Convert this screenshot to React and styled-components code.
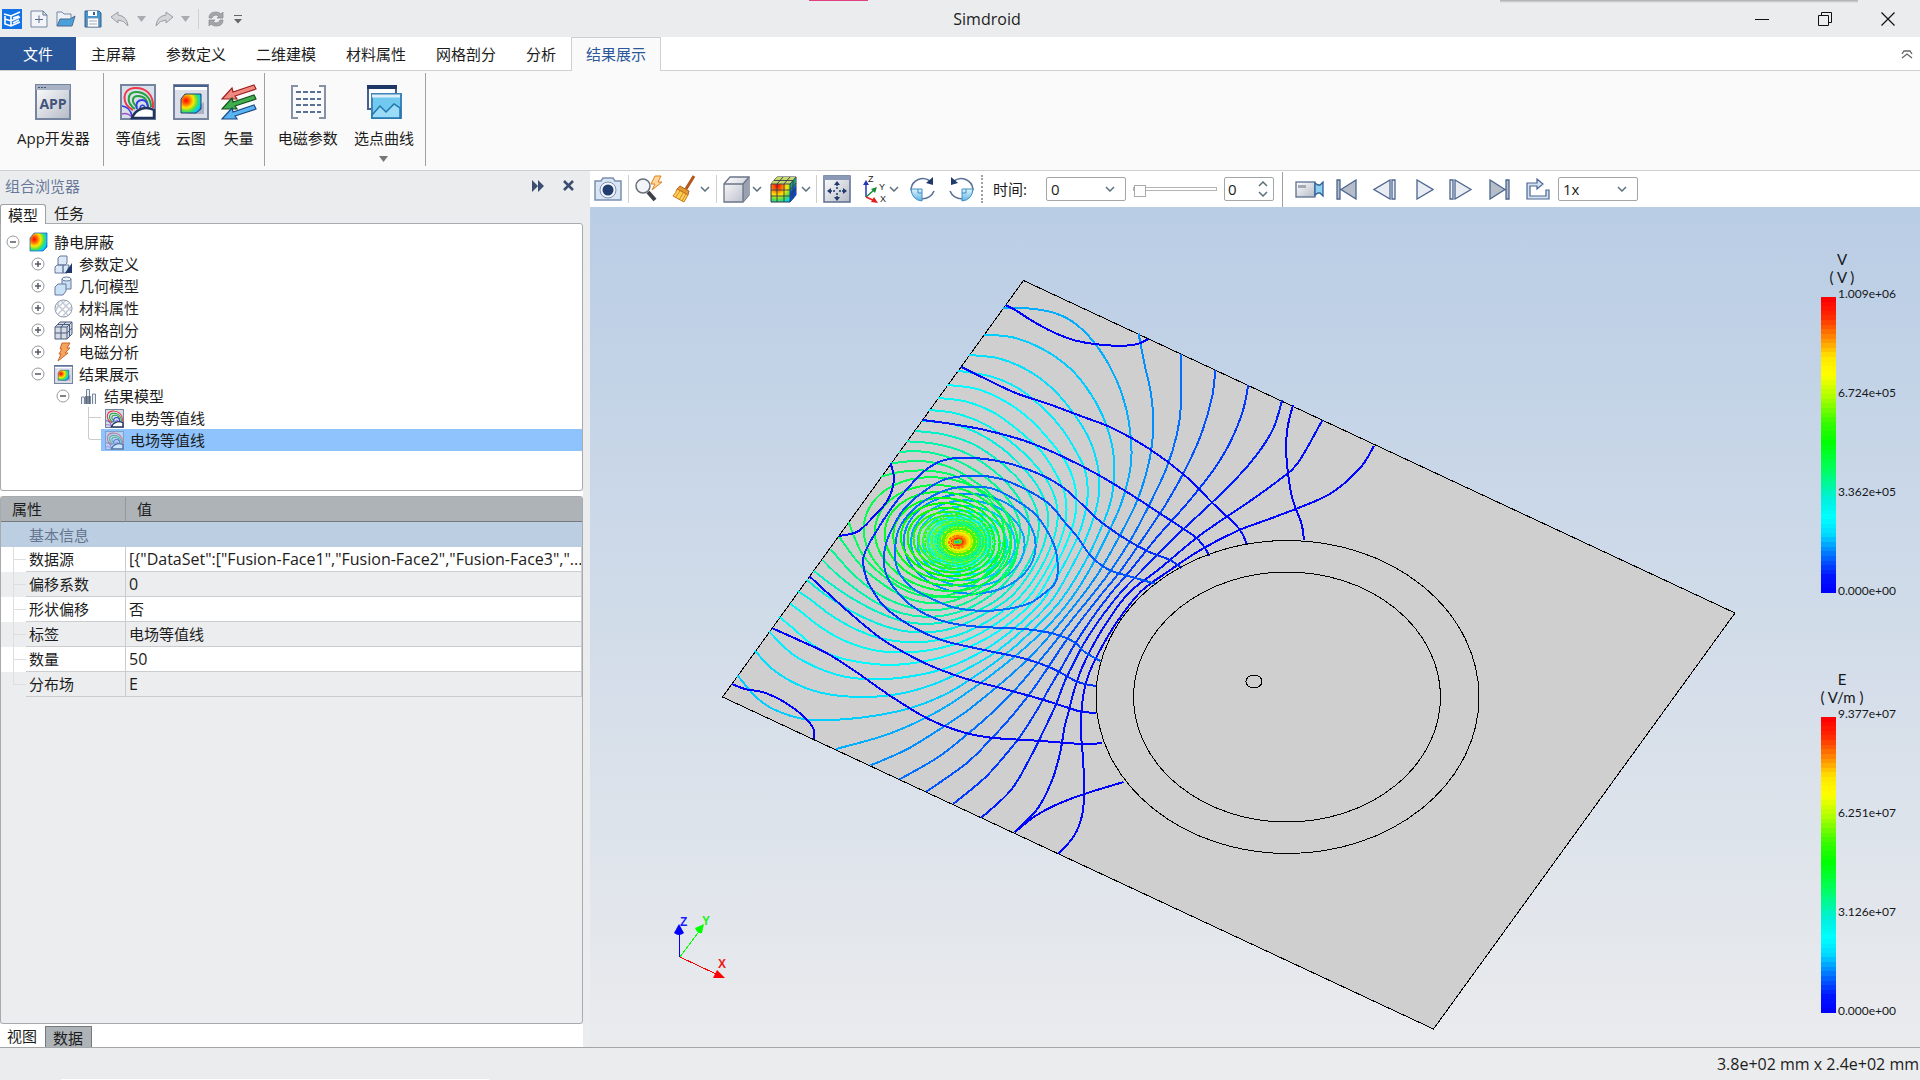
import React from "react";
import styled, { createGlobalStyle, css } from "styled-components";

const Global = createGlobalStyle`
  *, *::before, *::after { box-sizing: border-box; }
  html, body, #root { height: 100%; margin: 0; }
  body { background: #ebecee; color: #1c1c1c; overflow: hidden; }
  body, button, input, select, table {
    font-family: "Open Sans", "Noto Sans CJK SC", sans-serif;
    font-size: 15px;
    line-height: 20px;
  }
  button { border: 0; padding: 0; background: none; color: inherit; cursor: default; }
  svg { display: block; flex: none; }
`;

/* ---------- colour scale ---------- */
const STOPS = [
  [0, 0, 0, 255], [0.05, 0, 20, 255], [0.12, 0, 110, 255], [0.19, 0, 215, 255], [0.25, 0, 255, 255],
  [0.31, 0, 240, 225], [0.42, 0, 255, 90], [0.51, 0, 255, 0], [0.58, 60, 250, 0], [0.67, 180, 255, 0],
  [0.74, 255, 255, 0], [0.8, 255, 230, 0], [0.88, 255, 120, 0], [0.94, 255, 40, 0], [1, 255, 0, 0],
];
function scale(t) {
  for (let i = 1; i < STOPS.length; i++) {
    const a = STOPS[i - 1];
    const b = STOPS[i];
    if (t <= b[0]) {
      const f = (t - a[0]) / (b[0] - a[0]);
      return `rgb(${[1, 2, 3].map((k) => Math.round(a[k] + (b[k] - a[k]) * f)).join(",")})`;
    }
  }
  return "rgb(255,0,0)";
}
const BANDS = Array.from({ length: 64 }, (_, i) => {
  const t = 1 - i / 63;
  return `${scale(t)} ${(i / 64) * 100}% ${((i + 1) / 64) * 100}%`;
}).join(",");

/* ---------- contour data, in field units ---------- */
const POTENTIAL = [
  [[1831,528],[1790,597],[1704,674],[1568,735],[1450,782],[1345,840],[1250,908],[1178,965],[1112,1055],[1062,1145],[1030,1220],[1014,1300],[1011,1390],[1016,1460],[1020,1560],[1013,1640],[990,1700],[948,1751]],
  [[1687,450],[1618,579],[1568,628],[1475,700],[1345,795],[1232,895],[1150,963],[1100,1030],[1050,1115],[1015,1190],[992,1260],[975,1330],[965,1370],[952,1450],[930,1530],[890,1615],[825,1687]],
  [[1574,391],[1545,485],[1480,585],[1385,690],[1275,800],[1180,903],[1124,965],[1072,1035],[1022,1115],[990,1180],[965,1235],[938,1310],[905,1385],[870,1460],[815,1560],[732,1643]],
  [[1479,346],[1462,430],[1422,530],[1375,610],[1308,700],[1225,800],[1150,900],[1096,968],[1045,1040],[995,1120],[955,1195],[922,1255],[885,1325],[840,1400],[795,1460],[740,1525],[653,1602]],
  [[1387,300],[1378,380],[1350,485],[1307,590],[1250,700],[1188,800],[1120,905],[1070,970],[1015,1045],[970,1110],[920,1190],[875,1260],[820,1335],[765,1400],[690,1480],[578,1565]],
  [[1290,252],[1291,400],[1280,490],[1250,595],[1204,700],[1155,800],[1092,905],[1042,975],[985,1050],[935,1120],[885,1185],[830,1255],[765,1325],[690,1395],[610,1462],[503,1528]],
  [[1172,191],[1190,290],[1205,360],[1213,440],[1210,520],[1196,600],[1165,700],[1118,800],[1062,905],[1012,980],[958,1052],[900,1125],[835,1195],[765,1260],[685,1328],[600,1388],[520,1440],[422,1486]],
  [[792,113],[870,116],[940,130],[1000,165],[1060,235],[1110,330],[1138,420],[1150,500],[1152,560],[1145,620],[1122,705],[1082,800],[1032,905],[984,985],[930,1055],[868,1120],[790,1190],[705,1258],[620,1318],[540,1362],[450,1400],[325,1437]],
  [[739,194],[820,202],[900,235],[980,295],[1040,375],[1080,460],[1100,540],[1104,600],[1095,690],[1065,780],[1020,880],[955,990],[890,1065],[820,1135],[740,1200],[640,1268],[540,1312],[440,1336],[345,1348],[240,1348],[150,1318],[100,1280],[48,1215]],
  [[697,255],[780,265],[860,300],[930,355],[990,430],[1035,510],[1058,590],[1062,660],[1050,730],[1025,805],[985,890],[930,990],[860,1068],[780,1140],[700,1192],[600,1242],[500,1272],[400,1281],[300,1272],[220,1245],[150,1200],[98,1143]],
  [[665,302],[760,320],[840,358],[910,420],[960,480],[1000,550],[1022,600],[1030,665],[1020,740],[1000,805],[960,890],[905,990],[830,1070],[740,1140],[640,1192],[540,1218],[440,1228],[350,1220],[270,1192],[200,1150],[138,1085]],
  [[637,345],[720,357],[800,395],[870,450],[930,520],[965,570],[990,630],[998,690],[992,750],[970,820],[935,895],[885,985],[800,1068],[720,1120],[620,1162],[520,1182],[440,1183],[330,1162],[260,1125],[205,1075],[165,1040]],
  [[611,384],[690,395],[770,430],[840,485],[900,545],[940,610],[965,670],[970,730],[960,790],[925,880],[865,980],[780,1056],[690,1110],[590,1140],[500,1147],[420,1138],[340,1108],[280,1070],[230,1028],[195,1000]],
  [[586,420],[660,430],[740,462],[810,512],[870,570],[915,630],[940,690],[945,750],[930,820],[895,900],[840,980],[760,1047],[680,1090],[600,1112],[530,1117],[450,1105],[380,1078],[310,1035],[255,990],[218,963]],
  [[567,452],[650,462],[720,488],[790,535],[850,595],[890,650],[915,710],[918,765],[905,830],[870,905],[815,980],[740,1032],[660,1072],[580,1087],[510,1082],[440,1060],[370,1025],[300,978],[243,930]],
  [[545,483],[620,492],[700,518],[765,560],[825,615],[865,670],[888,725],[892,780],[880,840],[845,910],[790,978],[715,1026],[640,1054],[575,1062],[510,1053],[440,1025],[370,985],[310,942],[262,902]],
  [[524,514],[600,521],[680,545],[745,585],[800,635],[840,690],[862,740],[865,790],[850,850],[815,918],[765,970],[700,1013],[630,1036],[570,1040],[510,1030],[450,1005],[390,965],[330,915],[287,870]],
  [[500,545],[580,546],[655,568],[720,605],[775,650],[815,700],[838,755],[840,800],[825,860],[790,920],[740,968],[680,1003],[620,1019],[560,1018],[500,1001],[440,970],[375,915],[310,838]],
  [[479,580],[560,573],[640,590],[700,625],[750,665],[790,710],[812,760],[815,805],[800,862],[765,918],[715,962],[655,992],[600,1000],[540,990],[480,960],[400,893],[333,800]],
  [[451,620],[510,605],[580,602],[650,615],[710,650],[755,690],[785,735],[795,785],[790,835],[765,888],[720,935],[665,968],[600,980],[530,966],[460,920],[400,855],[360,757]],
];

const FIELD = [
  [0.0, [[800,105],[830,122],[870,150],[930,185],[1000,213],[1100,227],[1165,223],[1200,207]]],
  [0.02, [[675,290],[750,330],[830,370],[920,402],[1010,438],[1100,475],[1200,535],[1300,615],[1380,700],[1440,760],[1462,790],[1475,823]]],
  [0.05, [[567,450],[650,462],[750,482],[860,515],[960,560],[1060,615],[1160,680],[1260,750],[1330,800],[1355,830],[1370,857]]],
  [0.02, [[477,578],[487,628],[470,690],[430,740],[385,785],[333,798]]],
  [0.03, [[250,918],[290,958],[370,1035],[450,1105],[520,1150],[600,1192],[700,1230],[800,1258],[900,1288],[980,1315],[1010,1325],[1052,1329]]],
  [0.01, [[147,1075],[220,1110],[300,1150],[380,1205],[480,1280],[580,1345],[660,1380],[750,1402],[900,1413],[1000,1421],[1070,1420]]],
  [0.0, [[33,1242],[70,1257],[130,1270],[200,1310],[258,1368],[262,1407]]],
  [0.0, [[825,1687],[880,1640],[940,1605],[1020,1572],[1130,1536]]],
  [0.01, [[1604,406],[1588,480],[1586,560],[1601,678],[1628,760],[1635,810]]],
  [0.07, [[1292,895],[1260,870],[1200,845],[1140,810],[1060,750],[970,660],[900,615],[800,578],[690,563],[620,573],[570,605],[530,650],[490,700],[440,780],[402,860],[410,925],[430,965],[460,1010],[530,1065],[620,1110],[740,1140],[850,1165],[930,1195],[1000,1235],[1052,1248]]],
  [0.1, [[1222,942],[1150,920],[1090,900],[1040,860],[1000,800],[960,750],[920,700],[850,655],[780,625],[710,617],[630,628],[570,665],[530,700],[500,740],[465,820],[460,890],[475,935],[500,970],[530,1002],[580,1035],[640,1058],[720,1070],[850,1077],[930,1090],[990,1115],[1020,1145],[1065,1173]]],
  [0.12, [[700,650],[760,655],[820,685],[880,730],[920,790],[942,850],[942,930],[910,968],[870,998],[820,1014],[740,1023],[660,1014],[600,990],[540,955],[500,905],[490,850],[500,780],[540,720],[600,675],[650,655],[700,650]]],
];

function smooth(points) {
  let d = `M${points[0][0]} ${points[0][1]}`;
  for (let i = 0; i < points.length - 1; i++) {
    const p0 = points[i - 1] || points[i];
    const p1 = points[i];
    const p2 = points[i + 1];
    const p3 = points[i + 2] || p2;
    const c = [
      p1[0] + (p2[0] - p0[0]) / 6, p1[1] + (p2[1] - p0[1]) / 6,
      p2[0] - (p3[0] - p1[0]) / 6, p2[1] - (p3[1] - p1[1]) / 6,
    ].map((n) => n.toFixed(1));
    d += `C${c[0]} ${c[1]} ${c[2]} ${c[3]} ${p2[0]} ${p2[1]}`;
  }
  return d;
}

/* closed curves around the charge, given by their reach on each side of it */
function loop(left, right, up, down, lean) {
  const cx = 956.7;
  const cy = 541.7;
  const pts = [];
  for (let i = 0; i <= 32; i++) {
    const a = (i / 32) * Math.PI * 2;
    const c = Math.cos(a);
    const s = Math.sin(a);
    const rx = (left + right) / 2;
    const ry = (up + down) / 2;
    pts.push([cx + (right - left) / 2 + rx * c, cy + (down - up) / 2 + ry * s + lean * rx * c]);
  }
  return smooth(pts);
}

const LOOPS = Array.from({ length: 28 }, (_, k) => {
  const f = Math.pow(0.88, k);
  return { d: loop(93 * f, (61 + 6 * (1 - f)) * f, 64 * f, (55 + 6 * (1 - f)) * f, 0.1 * f), t: 0.43 + k * 0.02 };
});
const FIELD_LOOPS = Array.from({ length: 22 }, (_, k) => {
  const f = Math.pow(0.86, k);
  return { d: loop(53 * f, 79 * f, 48 * f, 52 * f, 0.03 * f), t: 0.14 + k * 0.02 };
});

function FieldPlot() {
  return (
    <PlotSvg viewBox="590 207 1330 840" preserveAspectRatio="xMidYMid meet" role="img" aria-label="电场等值线">
      <defs>
        <radialGradient id="core">
          <stop offset="0" stopColor="#00c8d8" /><stop offset="0.06" stopColor="#6be000" /><stop offset="0.1" stopColor="#ff3a00" />
          <stop offset="0.18" stopColor="#ffb400" /><stop offset="0.26" stopColor="#f4f400" /><stop offset="0.36" stopColor="#4cf200" />
          <stop offset="0.5" stopColor="#00ff70" stopOpacity="0.7" /><stop offset="0.7" stopColor="#00ffd0" stopOpacity="0.4" /><stop offset="1" stopColor="#00ffff" stopOpacity="0" />
        </radialGradient>
      </defs>
      <g shapeRendering="crispEdges" fill="none">
        <path d="M1023.500 280.500L1735 613L1433.500 1029L722.500 697Z" fill="#cfcfcf" stroke="#000" strokeWidth="1" />
        <g transform="translate(720 270) scale(0.357143 0.333333)">
          {POTENTIAL.map((p, i) => (
            <path key={i} d={smooth(p)} stroke={scale(0.015 + i * 0.021)} strokeWidth="2" vectorEffect="non-scaling-stroke" />
          ))}
        </g>
        {FIELD_LOOPS.map((l, i) => (
          <path key={i} d={l.d} stroke={scale(l.t)} strokeWidth="2" strokeDasharray={i > 4 ? "5 2 3 1" : undefined} />
        ))}
        {LOOPS.map((l, i) => (
          <path key={i} d={l.d} stroke={scale(l.t)} strokeWidth={i > 10 ? 1 : 2} strokeDasharray={i > 12 ? "5 1 3 2" : undefined} />
        ))}
        <g transform="translate(720 270) scale(0.357143 0.333333)">
          {FIELD.map(([t, p], i) => (
            <path key={i} d={smooth(p)} stroke={scale(t)} strokeWidth="2" vectorEffect="non-scaling-stroke" />
          ))}
        </g>
        <ellipse cx="959" cy="541.500" rx="42" ry="34" fill="url(#core)" />
        {[14, 18, 22, 26, 30, 34].map((r, i) => (
          <ellipse key={r} cx="959" cy="541.500" rx={r} ry={r * 0.8} stroke={["#ffe600", "#b8ff00", "#00e6c0", "#8cf000", "#00f0ff", "#30f000"][i]} strokeWidth="1" strokeDasharray="2 2 3 1" />
        ))}
        <ellipse cx="957" cy="542" rx="8" ry="6" stroke="#ff7a00" strokeWidth="2" strokeDasharray="3 1" />
        <ellipse cx="957" cy="542" rx="6" ry="4" stroke="#ff2a00" strokeWidth="1" strokeDasharray="4 1" />
        <ellipse cx="957" cy="542" rx="3" ry="2" fill="#00c8d8" stroke="#6be000" />
        <g stroke="#000" strokeWidth="1">
          <ellipse cx="1287.500" cy="697" rx="191.500" ry="156.500" />
          <ellipse cx="1287" cy="697" rx="153.500" ry="125" />
          <ellipse cx="1254" cy="681.500" rx="8" ry="6.500" />
        </g>
        <path d="M679.500 957V932" stroke="#0000ff" />
        <path d="M680 957L700 930" stroke="#00ff00" />
        <path d="M680 957L716 974" stroke="#ff0000" />
      </g>
      <path d="M679 924L684 933Q679 937 674 933Z" fill="#0000ff" />
      <path d="M704 924L702 933Q697 934 695 928Z" fill="#00ff00" />
      <path d="M725 978L713 978L717 970Z" fill="#ff0000" />
      <g fontFamily="Liberation Sans, sans-serif" fontWeight="700" fontSize="12">
        <text x="680" y="926" fill="#1a1aff">Z</text>
        <text x="702" y="925" fill="#22f022">Y</text>
        <text x="718" y="968" fill="#f01818">X</text>
      </g>
    </PlotSvg>
  );
}

/* ---------- icons ---------- */
const NAVY = "#3b4d70";
const Svg = ({ w = 28, h = w, vb, children }) => (
  <svg width={w} height={h} viewBox={vb || `0 0 ${w} ${h}`} fill="none" aria-hidden="true">{children}</svg>
);
const HiddenSvg = styled.svg`position: absolute;`;
const Defs = () => (
  <HiddenSvg width="0" height="0" aria-hidden="true">
    <defs>
      <linearGradient id="steel" x1="0" y1="0" x2="1" y2="1"><stop offset="0" stopColor="#fff" /><stop offset="1" stopColor="#b4bac6" /></linearGradient>
      <linearGradient id="sky" x1="0" y1="0" x2="0" y2="1"><stop offset="0" stopColor="#e3f3fc" /><stop offset="1" stopColor="#5fb4e4" /></linearGradient>
      <radialGradient id="heat" cx="0.25" cy="0.35" r="0.95">
        <stop offset="0" stopColor="#f00" /><stop offset="0.2" stopColor="#ff6a00" /><stop offset="0.4" stopColor="#ffe600" />
        <stop offset="0.6" stopColor="#4be04b" /><stop offset="0.78" stopColor="#00cfff" /><stop offset="1" stopColor="#0030e0" />
      </radialGradient>
    </defs>
  </HiddenSvg>
);

const Logo = () => (
  <Svg w={20}><rect width="20" height="20" fill="#1273e6" /><path d="M2 5L9 7L18 3M3 7V15L9 17L18 13M3 10L9 12L18 8M9 7V17M11 9L17 7M11 14L17 11" stroke="#fff" strokeWidth="1.600" /></Svg>
);
const NewIcon = () => <Svg w={18}><path d="M1 1H13L17 5V17H1Z" fill="#f2f4f8" stroke="#7787a3" /><path d="M13 1V5H17M9 5.500V13M5 9.500H13" stroke="#566a8d" /></Svg>;
const OpenIcon = () => <Svg w={20} h={16}><path d="M1 15V1H6L8 3H15V7" fill="#eef1f6" stroke="#7787a3" /><path d="M1 15L4 8H14L19 5L16 15Z" fill="#4aa0d8" stroke="#4b6a92" /></Svg>;
const SaveIcon = () => <Svg w={18}><path d="M1 1H15L17 3V17H1Z" fill="#3f97d0" stroke="#3f5f8c" /><rect x="4" y="1" width="9" height="5" fill="#fff" /><rect x="9" y="2" width="2" height="3" fill="#3f5f8c" /><rect x="3.500" y="8" width="11" height="9" fill="#fff" stroke="#8898b0" /><path d="M5 11H13M5 14H13" stroke="#9aa6b8" /></Svg>;
const UndoIcon = ({ flip }) => <Svg w={20} h={16}><path transform={flip ? "matrix(-1 0 0 1 20 0)" : undefined} d="M1 6L8 1V4Q17 5 18 15Q14 9 8 9V12Z" fill="#d4d7da" stroke="#9a9ea2" /></Svg>;
const Triangle = ({ c = "#a8acb0" }) => <Svg w={9} h={6}><path d="M0 0H9L4.500 6Z" fill={c} /></Svg>;
const RefreshIcon = () => <Svg w={18}><path d="M2 8Q2 2 9 2Q12 2 14 4L16 2V8H10L12 6Q9 4 6 6L5 8ZM16 10Q16 16 9 16Q6 16 4 14L2 16V10H8L6 12Q9 14 12 12L13 10Z" fill="#a4a6a8" stroke="#85878a" strokeWidth="0.700" /></Svg>;
const MoreIcon = () => <Svg w={10}><path d="M1 1.500H9" stroke="#666" /><path d="M1 5H9L5 9.500Z" fill="#666" /></Svg>;

const AppIcon = () => (
  <Svg w={36}><rect x="1" y="1" width="34" height="34" fill="url(#steel)" stroke="#75849f" strokeWidth="2" /><rect x="1" y="1" width="34" height="5" fill="#a8b2c4" /><path d="M3 3.500H11" stroke="#44587c" strokeDasharray="2 1" />
    <text x="18" y="25" textAnchor="middle" fontFamily="Open Sans, sans-serif" fontSize="14" fontWeight="700" fill="#41557a">APP</text></Svg>
);
const ContourIcon = ({ w = 36, faded }) => (
  <Svg w={w} vb="0 0 36 36"><g opacity={faded ? 0.55 : 1}><rect x="1" y="1" width="34" height="34" fill="#d9e0ec" stroke="#75849f" strokeWidth="2" />
    <path d="M13 26C1 20 2 5 14 4C25 3 34 10 33 24" stroke="#f0384a" strokeWidth="2" />
    <path d="M15 25C5 18 8 8 16 8C25 8 31 14 31 23" stroke="#24a13c" strokeWidth="2" />
    <path d="M17 23C10 17 13 12 18 12C25 12 28 17 28 23" stroke="#24a13c" strokeWidth="2" />
    <path d="M17 25C15 18 19 16 22 16C26 16 28 20 28 25" stroke="#3340dd" strokeWidth="2" />
    <path d="M20 25C20 20 25 20 25 25" stroke="#3340dd" strokeWidth="1.500" />
    <path d="M2 22Q10 23 12 32" stroke="#3340dd" strokeWidth="1.500" /><path d="M2 30Q7 28 12 33" stroke="#a050c8" strokeWidth="1.500" />
    <path d="M12 34C16 24 26 22 34 26V34Z" fill="#fff" stroke="#20345c" strokeWidth="2.500" /></g></Svg>
);
const CloudMapIcon = ({ w = 36 }) => (
  <Svg w={w} vb="0 0 36 36"><rect x="1" y="1" width="34" height="34" fill="#d9dee8" stroke="#75849f" strokeWidth="2" /><path d="M2 4.500H34" stroke="#fff" strokeWidth="3" /><path d="M1 2H35" stroke="#46618f" strokeWidth="2" /><path d="M14 30H31V18Z" fill="#aab1bf" /><path d="M8 15L12 10H28V25L23 29H8Z" fill="url(#heat)" stroke="#26406e" /></Svg>
);
const VectorIcon = () => (
  <Svg w={36}>{[["#f08a80", "#a02020", 0], ["#3fae4e", "#17501f", 10], ["#59b4f2", "#1d4a86", 20]].map(([f, s, y]) => (
    <path key={y} transform={`translate(0 ${y})`} d="M1 15L11 4L12 8L33 1L35 5L14 12L16 15Z" fill={f} stroke={s} strokeWidth="1.200" />))}</Svg>
);
const MatrixIcon = () => <Svg w={36}><path d="M8 2H2V34H8M29 2H35V34H29" stroke="#8791a6" strokeWidth="2" /><path d="M6 8H31M6 15H31M6 21H31M6 28H31" stroke="#5a7097" strokeWidth="2" strokeDasharray="5 2" /></Svg>;
const CurveIcon = () => <Svg w={36}><rect x="2" y="2" width="28" height="23" fill="#fff" stroke="#46618f" strokeWidth="2" /><rect x="1" y="1" width="30" height="4" fill="#1f3764" /><rect x="6" y="10" width="29" height="24" fill="#72c9f0" stroke="#3f83b8" strokeWidth="2" /><path d="M6 12H34" stroke="#ddf0fa" strokeWidth="3" /><path d="M6 31L14 22L20 28L28 20L34 24V34H6Z" fill="#9adcf7" stroke="#2277ac" strokeWidth="1.500" /></Svg>;

const HeatIcon = () => <Svg w={19} h={20}><path d="M1 6L5 1H18V15L14 19H1Z" fill="url(#heat)" stroke="#0a5dd0" strokeWidth="0.700" /></Svg>;
const ParamIcon = () => <Svg w={19}><path d="M4 10V3L6 1H13V8L11 10ZM1 18V12L3 10H9V18ZM9 18V10H15L13 18Z" fill="#dbe8f5" stroke="#66799c" /><path d="M11 18H18V8Z" fill="#20396b" /></Svg>;
const GeoIcon = () => <Svg w={19} h={20}><path d="M8 3V13H17V3" fill="#c9dff4" stroke="#66799c" /><ellipse cx="12.500" cy="3" rx="4.500" ry="2" fill="#edf5fc" stroke="#66799c" /><path d="M1 19V11L4 8H12V15L9 19Z" fill="#c9e2f7" stroke="#66799c" /></Svg>;
const MatIcon = () => <Svg w={19}><circle cx="9.500" cy="9.500" r="8.500" fill="#fff" stroke="#8290a8" /><path d="M3 5L14 16M7 2L17 12M5 3L2 12M15 4L4 15M17 8L9 17M11 2L2 10" stroke="#c4cad5" strokeWidth="1.500" /></Svg>;
const MeshIcon = () => <Svg w={19}><path d="M1 6L6 1H18V13L13 18H1Z" fill="#d6dbe4" stroke="#4b5d7e" /><path d="M1 6H13V18M13 6L18 1M7 6V18M1 12H13L18 7M7 6L12 1M3.500 3.500H15.500V15.500" stroke="#4b5d7e" /></Svg>;
const BoltIcon = ({ w = 16 }) => <Svg w={w} h={20} vb="0 0 16 20"><path d="M6 1H14L11 6H14L9 11H12L2 19L5 12H3L6 7H4Z" fill="#f6a45c" stroke="#c8672a" /></Svg>;
const BarsIcon = () => <Svg w={17}><path d="M1.500 16V9H4.500V16M6.500 16V1.500H9.500V16M12.500 16V6H15.500V16" stroke="#75849a" fill="#eef1f4" /><rect x="5" y="8" width="6" height="8" fill="#4c5a6e" opacity="0.700" /></Svg>;
const Expander = ({ open }) => <Svg w={14} h={14}><circle cx="7" cy="7" r="6" fill="#fff" stroke="#9a9a9a" /><path d={open ? "M4 7H10" : "M4 7H10M7 4V10"} stroke="#555b66" strokeWidth="1.500" /></Svg>;

const CameraIcon = () => <Svg w={28} h={24}><path d="M1 4H7L9 1H19L21 4H27V23H1Z" fill="#d8e5f5" stroke="#7c8fb0" strokeWidth="1.500" /><circle cx="14" cy="13" r="8" fill="#f3f6fb" stroke="#7c8fb0" /><circle cx="14" cy="13" r="5.500" fill="#223d70" /></Svg>;
const FindIcon = () => <Svg w={28}><circle cx="8" cy="11" r="7" fill="#f1f4f8" stroke="#6b7078" strokeWidth="1.500" /><path d="M13 17L20 25" stroke="#3e4248" strokeWidth="4" /><path d="M20 1H26L23 7H27L17 15L20 9H16Z" fill="#ffd79a" stroke="#e07f1e" /></Svg>;
const BroomIcon = () => <Svg w={24} h={28}><path d="M22 1L14 14" stroke="#b4561c" strokeWidth="3" /><path d="M8 11L17 16L16 20L5 14Z" fill="#e39a30" stroke="#9c4e16" strokeWidth="0.800" /><path d="M5 14L16 20L12 27L1 21Q4 18 5 14Z" fill="#ffd057" stroke="#c97818" /><path d="M8 16L4 22M11 18L7 25M14 19L10 26" stroke="#c97818" strokeWidth="0.800" /></Svg>;
const CubeIcon = () => <Svg w={27}><path d="M1 8L7 1H26V19L20 26H1Z" fill="url(#steel)" stroke="#6b7488" strokeWidth="1.300" /><path d="M20 8L26 1V19L20 26Z" fill="#9aa2b2" /><path d="M1 8H20V26M20 8L26 1" stroke="#6b7488" strokeWidth="1.300" /></Svg>;
const HeatCubeIcon = () => <Svg w={27}><path d="M1 8L7 1H26V19L20 26H1Z" fill="url(#heat)" stroke="#334" /><path d="M1 8L7 1H26L20 8Z" fill="#c9d86a" /><path d="M20 8L26 1V19L20 26Z" fill="#1a9c7c" /><path d="M20 16L26 9V19L20 26Z" fill="#0a49d8" /><path d="M1 8H20V26M20 8L26 1M7 8V26M14 8V26M1 14H20L26 7M1 20H20L26 13M7 8L13 1M14 8L20 1M4 4.500H23V22.500" stroke="#333c50" strokeWidth="0.900" /></Svg>;
const FitIcon = () => <Svg w={28}><rect x="1" y="1" width="26" height="26" fill="url(#steel)" stroke="#5c6e92" strokeWidth="1.500" /><rect x="1" y="1" width="26" height="4" fill="#8a9ab6" /><g stroke="#20396b" strokeWidth="1.500" strokeDasharray="2 1"><path d="M14 9V14M14 18V23M7 16H12M16 16H21" /></g><path d="M14 6L17 10H11ZM14 26L17 22H11ZM4 16L8 13V19ZM24 16L20 13V19Z" fill="#20396b" /></Svg>;
const AxesIcon = () => (
  <Svg w={24} h={28}><path d="M3 22V8" stroke="#2338b4" strokeWidth="1.500" /><path d="M3 22L11 15" stroke="#168b38" strokeWidth="1.500" /><path d="M3 22L12 26" stroke="#e02020" strokeWidth="1.500" /><path d="M3 5L6 10H0Z" fill="#2338b4" /><path d="M14 12L12 18L8 14Z" fill="#168b38" /><path d="M15 28L8 27L11 22Z" fill="#e02020" />
    <g fontFamily="Liberation Sans, sans-serif" fontSize="9" fill="#222"><text x="5" y="7">Z</text><text x="16" y="15">Y</text><text x="17" y="27">X</text></g></Svg>
);
const RotateIcon = ({ flip }) => <Svg w={27}><g transform={flip ? "matrix(-1 0 0 1 27 0)" : undefined}><path d="M21 5A12 12 0 0 0 2 13A12 12 0 0 0 25 15" stroke="#5b7297" strokeWidth="1.600" /><path d="M17 7L24 9V1Z" fill="#20396b" /><path d="M2 13H13V25Q3 24 2 13Z" fill="url(#sky)" stroke="#3c8fc4" /><path d="M9 13V17H13" stroke="#3c8fc4" /></g></Svg>;
const Chevron = ({ up }) => <Svg w={10} h={6}><path d={up ? "M1 5L5 1L9 5" : "M1 1L5 5L9 1"} stroke="#5b6f7c" strokeWidth="1.500" /></Svg>;
const VideoIcon = () => <Svg w={29} h={18}><rect x="1" y="2" width="19" height="15" fill="url(#steel)" stroke="#5c6e92" strokeWidth="1.300" /><rect x="3" y="5" width="8" height="3" fill="#a5a9b2" /><path d="M20 3L23 5H25L28 2V16L25 13H23L20 15Z" fill="#8fd0f2" stroke="#2f5f94" strokeWidth="1.300" /></Svg>;
const PLAY = {
  first: [21, "M1 1H4V20H1ZM20 1V20L5 10.500Z", true],
  back: [24, "M17 1V20L1 10.500ZM19 1H22V20H19Z"],
  play: [18, "M1 1V20L17 10.500Z"],
  next: [24, "M1 1H4V20H1ZM6 1V20L22 10.500Z"],
  last: [21, "M1 1V20L16 10.500ZM17 1H20V20H17Z", true],
};
const PlayIcon = ({ kind }) => <Svg w={PLAY[kind][0]} h={21}><path d={PLAY[kind][1]} fill={PLAY[kind][2] ? "#b6bcc8" : "#e9ecf2"} stroke="#4c6690" strokeWidth="1.300" /></Svg>;
const LoopIcon = () => <Svg w={24} h={22}><path d="M1 5H11V1L17 6L11 11V8H4V18H20V12H23V21H1Z" fill="#d3e2f2" stroke="#4c6690" strokeWidth="1.200" /></Svg>;

/* ---------- shell ---------- */
const Window = styled.div`
  display: flex; flex-direction: column; height: 100vh; background: #ebecee;
`;
const TitleBar = styled.header`
  display: grid; grid-template-columns: 1fr auto 1fr; align-items: center; height: 37px; flex: none;
  background: linear-gradient(#e0407f, #e0407f) 809px 0 / 59px 1px no-repeat, linear-gradient(#aaa, #ebecee) 1500px 0 / 358px 3px no-repeat, #ebecee;
`;
const QuickBar = styled.div`display: flex; align-items: center; gap: 8px; padding-left: 2px;`;
const QuickButton = styled.button`display: flex; align-items: center; gap: ${(p) => p.$gap || 0}px;`;
const QuickLine = styled.span`width: 1px; height: 20px; background: #cfd1d3;`;
const Title = styled.h1`margin: 0; padding-left: 54px; font-size: 16px; font-weight: 400; line-height: 20px;`;
const WindowButtons = styled.div`display: flex; justify-content: flex-end; padding-right: 1px;`;
const WindowButton = styled.button`width: 63px; height: 36px; display: grid; place-items: center;`;

const RibbonTabs = styled.nav`display: flex; height: 34px; flex: none; background: #fff; border-bottom: 1px solid #cfcfcf;`;
const RibbonTab = styled.button`
  padding: 0 15px; height: 34px;
  ${(p) => p.$file && css`padding: 0 23px; height: 33px; background: #2a579a; color: #fff;`}
  ${(p) => p.$active && css`color: #2a579a; background: #fafafa; border: 1px solid #cfcfcf; border-bottom: 0; padding: 0 14px 2px;`}
`;
const Collapse = styled.button`margin-left: auto; padding: 0 7px;`;
const Ribbon = styled.div`display: flex; height: 100px; flex: none; padding: 2px 0 4px; background: #fafafa; border-bottom: 1px solid #cfcfcf;`;
const RibbonGroup = styled.div`display: flex; gap: ${(p) => p.$gap}px; padding: 0 ${(p) => p.$end}px 0 ${(p) => p.$start}px; border-right: 1px solid #a0a0a0;`;
const RibbonButton = styled.button`display: flex; flex-direction: column; align-items: center; padding-top: 11px; gap: 8px; white-space: nowrap;`;

const Body = styled.main`flex: 1; min-height: 0; display: grid; grid-template-columns: 590px minmax(0, 1fr);`;
const Dock = styled.aside`display: flex; flex-direction: column; min-height: 0; padding-right: 7px; background: #ebecee;`;
const DockTitle = styled.div`
  display: flex; align-items: center; height: 33px; flex: none; padding: 0 0 4px 5px; color: #68789a;
  span { flex: 1; }
  button { width: 30px; display: grid; place-items: center; }
`;
const DockTabs = styled.div`display: flex; height: 19px; flex: none; align-items: flex-end;`;
const DockTab = styled.button`
  height: 20px; padding: 0 8px; line-height: 20px;
  ${(p) => p.$active && css`position: relative; z-index: 1; background: #fff; border: 1px solid #a0a0a0; border-bottom: 0; border-radius: 3px 3px 0 0; margin-bottom: -1px; padding: 0 7px;`}
`;
const Tree = styled.ul`
  flex: none; height: 268px; margin: 0; padding: 7px 0 0; list-style: none; background: #fff;
  border: 1px solid #a8abae; border-radius: 0 3px 3px 3px;
`;
const TreeRow = styled.li`display: flex; height: 22px; padding-left: ${(p) => p.$indent}px;`;
const TreeItem = styled.button`
  display: flex; align-items: center; gap: 6px; text-align: left; padding-left: 4px;
  background: ${(p) => (p.$selected ? "#8fc3fd" : "none")}; flex: 1;
`;
const IconSlot = styled.span`display: grid; place-items: center; width: 19px; height: 22px;`;
const Toggle = styled.button`width: 21px; display: grid; place-items: center; padding-right: 4px;`;
const Branch = styled.span`
  width: 13px; margin-left: 8px; border-left: 1px solid #ccc; height: ${(p) => (p.$last ? 11 : 22)}px;
  ${(p) => p.$last ? css`border-bottom: 1px solid #ccc; border-radius: 0 0 0 3px;` : css`background: linear-gradient(#ccc, #ccc) 0 10px / 100% 1px no-repeat;`}
`;

const Properties = styled.section`flex: 1; min-height: 0; border: 1px solid #a8abae; border-radius: 3px; background: #ecedef;`;
const Gap = styled.div`height: 5px; flex: none; background: #fff;`;
const PropTable = styled.table`
  width: 100%; table-layout: fixed; border-collapse: separate; border-spacing: 0;
  th, td { font-weight: 400; text-align: left; padding: 0; height: 25px; white-space: nowrap; overflow: hidden; }
  thead th { background: #aeb3b7; border-bottom: 1px solid #75797c; padding-left: 11px; }
  thead th + th { border-left: 1px solid #94989b; }
`;
const SectionCell = styled.th`&&{ background: #bccfe2; color: #66758f; padding-left: 28px; }`;
const PropRow = styled.tr`background: ${(p) => (p.$alt ? "#ecedef" : "#fff")};`;
const Rail = styled.td`
  background: linear-gradient(#dcdedf, #dcdedf) 12px 0 / 1px ${(p) => (p.$last ? "12px" : "100%")} no-repeat,
    linear-gradient(#dcdedf, #dcdedf) 12px 12px / 13px 1px no-repeat;
`;
const PropName = styled.th`border-bottom: 1px solid #cacccd; && { padding-left: 3px; }`;
const PropValue = styled.td`
  border: solid #cacccd; border-width: 0 1px 1px 1px; font-size: ${(p) => (p.$latin ? 16 : 15)}px;
  && { padding-left: 3px; }
`;
const BottomTabs = styled.div`display: flex; align-items: flex-end; height: 23px; flex: none; background: #fff;`;
const BottomTab = styled.button`
  height: 21px; padding: 0 8px 0 7px; line-height: 21px;
  ${(p) => p.$active && css`background: #aeb3b7; border: 1px solid #75797c; border-bottom: 0; line-height: 22px;`}
`;

const Stage = styled.section`display: flex; flex-direction: column; min-width: 0; min-height: 0;`;
const Toolbar = styled.div`display: flex; align-items: center; height: 36px; flex: none; padding-left: 4px; background: #fff;`;
const Tool = styled.button`display: flex; align-items: center; gap: ${(p) => p.$gap || 4}px; margin-right: ${(p) => p.$after || 12}px;`;
const Divider = styled.span`
  flex: none; width: 1px; height: ${(p) => (p.$tall ? 35 : 28)}px; margin-right: ${(p) => p.$after || 6}px;
  ${(p) => p.$dotted ? css`width: 2px; border-left: 2px dotted #a0a0a0;` : css`background: ${p.$tall ? "#a0a0a0" : "#cfcfcf"};`}
`;
const TimeLabel = styled.label`width: 53px; flex: none; white-space: nowrap;`;
const SelectBox = styled.span`
  display: grid; grid-template-columns: minmax(0, 1fr) 20px; align-items: center; width: 80px; height: 24px; flex: none;
  border: 1px solid #a3a6a8; border-radius: 2px; background: #fff;
  select { grid-area: 1 / 1 / 2 / 3; appearance: none; border: 0; background: none; height: 22px; padding: 0 4px; outline: 0; color: inherit; }
  svg { grid-area: 1 / 2; pointer-events: none; }
`;
const Slider = styled.input`
  appearance: none; width: 84px; height: 16px; margin: 0 7px; background: none;
  &::-webkit-slider-runnable-track { height: 4px; border: 1px solid #b4b4b4; background: #fff; }
  &::-webkit-slider-thumb { appearance: none; width: 12px; height: 12px; margin-top: -3px; background: #fdfdfd; border: 1px solid #a8a8a8; }
`;
const Spin = styled.span`
  display: flex; width: 50px; height: 24px; flex: none; border: 1px solid #a3a6a8; border-radius: 2px; margin-right: 8px;
  input { appearance: textfield; width: 28px; border: 0; padding: 0 3px; background: none; outline: 0; color: inherit; }
  input::-webkit-inner-spin-button { appearance: none; }
  span { display: flex; flex-direction: column; justify-content: space-evenly; width: 20px; align-items: center; }
  button { display: block; }
`;
const Viewport = styled.div`
  position: relative; flex: 1; min-height: 0; overflow: hidden;
  background: linear-gradient(#b9cde5, #eaebed);
`;
const PlotSvg = styled.svg`width: 100%; height: 100%;`;
const Legend = styled.figure`
  position: absolute; right: 0; top: ${(p) => p.$top}px; width: 99px; margin: 0; color: #15181c;
  font-family: Lato, sans-serif; font-size: 12px; line-height: 16px;
`;
const LegendTitle = styled.figcaption`width: 42px; text-align: center; font-size: 15px; line-height: 18px; white-space: nowrap; display: flex; flex-direction: column; align-items: center;`;
const LegendBody = styled.div`display: flex; gap: 2px;`;
const LegendBar = styled.div`width: 15px; height: 296px; margin-top: 11px; background: linear-gradient(${BANDS});`;
const LegendLabels = styled.div`display: flex; flex-direction: column; justify-content: space-between; height: 313px;`;

const StatusBar = styled.footer`
  height: 33px; flex: none; display: flex; justify-content: flex-end; align-items: center; padding: 0 1px 0 0;
  border-top: 1px solid #a3a5a7; font-size: 16px;
  background: linear-gradient(#fff, #fff) 61px 100% / 428px 1px no-repeat, #ebecee;
`;

const TREE = [
  [0, "静电屏蔽", <HeatIcon />, true], [1, "参数定义", <ParamIcon />], [1, "几何模型", <GeoIcon />], [1, "材料属性", <MatIcon />],
  [1, "网格剖分", <MeshIcon />], [1, "电磁分析", <BoltIcon />], [1, "结果展示", <CloudMapIcon w={19} />, true], [2, "结果模型", <BarsIcon />, true],
  [3, "电势等值线", <ContourIcon w={19} />], [3, "电场等值线", <ContourIcon w={19} faded />],
];
const PROPS = [
  ["数据源", '[{"DataSet":["Fusion-Face1","Fusion-Face2","Fusion-Face3","...'], ["偏移系数", "0"], ["形状偏移", "否"],
  ["标签", "电场等值线"], ["数量", "50"], ["分布场", "E"],
];
const TABS = ["主屏幕", "参数定义", "二维建模", "材料属性", "网格剖分", "分析", "结果展示"];
const isLatin = (text) => /^[\x20-\x7e]+$/.test(text);

function ColourLegend({ name, unit, labels, top }) {
  return (
    <Legend $top={top}>
      <LegendTitle><span>{name}</span><span>( {unit} )</span></LegendTitle>
      <LegendBody><LegendBar /><LegendLabels>{labels.map((l) => <span key={l}>{l}</span>)}</LegendLabels></LegendBody>
    </Legend>
  );
}

export default function App() {
  return (
    <Window>
      <Global />
      <Defs />
      <TitleBar>
        <QuickBar>
          <Logo />
          <QuickButton aria-label="新建"><NewIcon /></QuickButton>
          <QuickButton aria-label="打开"><OpenIcon /></QuickButton>
          <QuickButton aria-label="保存"><SaveIcon /></QuickButton>
          <QuickButton aria-label="撤销" $gap={7}><UndoIcon /><Triangle /></QuickButton>
          <QuickButton aria-label="重做" $gap={7}><UndoIcon flip /><Triangle /></QuickButton>
          <QuickLine />
          <QuickButton aria-label="刷新"><RefreshIcon /></QuickButton>
          <QuickButton aria-label="更多"><MoreIcon /></QuickButton>
        </QuickBar>
        <Title>Simdroid</Title>
        <WindowButtons>
          <WindowButton aria-label="最小化"><Svg w={14}><path d="M0 7.500H14" stroke="#111" /></Svg></WindowButton>
          <WindowButton aria-label="还原"><Svg w={14}><path d="M0.500 3.500H10.500V13.500H0.500ZM3.500 3.500V0.500H13.500V10.500H10.500" stroke="#111" /></Svg></WindowButton>
          <WindowButton aria-label="关闭"><Svg w={14}><path d="M0.500 0.500L13.500 13.500M13.500 0.500L0.500 13.500" stroke="#111" strokeWidth="1.200" /></Svg></WindowButton>
        </WindowButtons>
      </TitleBar>
      <RibbonTabs>
        <RibbonTab $file>文件</RibbonTab>
        {TABS.map((t) => <RibbonTab key={t} $active={t === "结果展示"}>{t}</RibbonTab>)}
        <Collapse aria-label="折叠功能区"><Svg w={12} h={10}><path d="M1 5L3 2H9L11 5M1 9L6 5L11 9" stroke="#666" strokeWidth="1.300" /></Svg></Collapse>
      </RibbonTabs>
      <Ribbon>
        <RibbonGroup $start={17} $end={13} $gap={0}><RibbonButton><AppIcon />App开发器</RibbonButton></RibbonGroup>
        <RibbonGroup $start={12} $end={7} $gap={12}>
          <RibbonButton><ContourIcon />等值线</RibbonButton>
          <RibbonButton><CloudMapIcon />云图</RibbonButton>
          <RibbonButton><VectorIcon />矢量</RibbonButton>
        </RibbonGroup>
        <RibbonGroup $start={13} $end={11} $gap={16}>
          <RibbonButton><MatrixIcon />电磁参数</RibbonButton>
          <RibbonButton><CurveIcon />选点曲线<Triangle c="#777" /></RibbonButton>
        </RibbonGroup>
      </Ribbon>
      <Body>
        <Dock>
          <DockTitle>
            <span>组合浏览器</span>
            <button aria-label="展开"><Svg w={13} h={12}><path d="M0 0L6 6L0 12ZM6 0L12 6L6 12Z" fill={NAVY} /></Svg></button>
            <button aria-label="关闭面板"><Svg w={11}><path d="M1 1L10 10M10 1L1 10" stroke={NAVY} strokeWidth="2.500" /></Svg></button>
          </DockTitle>
          <DockTabs><DockTab $active>模型</DockTab><DockTab>任务</DockTab></DockTabs>
          <Tree>
            {TREE.map(([level, label, icon, open]) => (
              <TreeRow key={label + level} $indent={level === 3 ? 79 : 3 + level * 25}>
                {level < 3 ? <Toggle aria-label={label + (open ? "折叠" : "展开")}><Expander open={open} /></Toggle> : <Branch $last={label === "电场等值线"} />}
                <TreeItem $selected={label === "电场等值线"}><IconSlot>{icon}</IconSlot>{label}</TreeItem>
              </TreeRow>
            ))}
          </Tree>
          <Gap />
          <Properties>
            <PropTable>
              <colgroup><col width="25" /><col width="99" /><col /></colgroup>
              <thead><tr><th colSpan={2}>属性</th><th>值</th></tr></thead>
              <tbody>
                <tr><SectionCell colSpan={3}>基本信息</SectionCell></tr>
                {PROPS.map(([k, v], i) => (
                  <PropRow key={k} $alt={i % 2 === 1}><Rail $last={i === 5} /><PropName scope="row">{k}</PropName><PropValue $latin={isLatin(v)}>{v}</PropValue></PropRow>
                ))}
              </tbody>
            </PropTable>
          </Properties>
          <BottomTabs><BottomTab>视图</BottomTab><BottomTab $active>数据</BottomTab></BottomTabs>
        </Dock>
        <Stage>
          <Toolbar>
            <Tool aria-label="截图" $after={6}><CameraIcon /></Tool><Divider />
            <Tool aria-label="快速查找" $after={9}><FindIcon /></Tool>
            <Tool aria-label="清理" $after={6}><BroomIcon /><Chevron /></Tool><Divider />
            <Tool aria-label="视图方向" $gap={2} $after={8}><CubeIcon /><Chevron /></Tool>
            <Tool aria-label="显示方式" $after={5}><HeatCubeIcon /><Chevron /></Tool><Divider />
            <Tool aria-label="适应窗口"><FitIcon /></Tool>
            <Tool aria-label="坐标轴" $gap={2} $after={10}><AxesIcon /><Chevron /></Tool>
            <Tool aria-label="顺时针旋转"><RotateIcon /></Tool>
            <Tool aria-label="逆时针旋转" $after={6}><RotateIcon flip /></Tool>
            <Divider $dotted $after={10} />
            <TimeLabel htmlFor="time">时间:</TimeLabel>
            <SelectBox><select id="time" defaultValue="0"><option>0</option></select><Chevron /></SelectBox>
            <Slider type="range" min="0" max="10" defaultValue="0" aria-label="时间滑块" />
            <Spin><input type="number" defaultValue="0" aria-label="时间步" /><span><button aria-label="增加"><Chevron up /></button><button aria-label="减少"><Chevron /></button></span></Spin>
            <Divider $tall $after={12} />
            <Tool aria-label="录制"><VideoIcon /></Tool>
            <Tool aria-label="第一帧" $after={16}><PlayIcon kind="first" /></Tool>
            <Tool aria-label="上一帧" $after={19}><PlayIcon kind="back" /></Tool>
            <Tool aria-label="播放" $after={15}><PlayIcon kind="play" /></Tool>
            <Tool aria-label="下一帧" $after={16}><PlayIcon kind="next" /></Tool>
            <Tool aria-label="最后一帧" $after={16}><PlayIcon kind="last" /></Tool>
            <Tool aria-label="循环" $after={8}><LoopIcon /></Tool>
            <SelectBox><select aria-label="播放速度" defaultValue="1x"><option>1x</option></select><Chevron /></SelectBox>
          </Toolbar>
          <Viewport>
            <FieldPlot />
            <ColourLegend top={43} name="V" unit="V" labels={["1.009e+06", "6.724e+05", "3.362e+05", "0.000e+00"]} />
            <ColourLegend top={463} name="E" unit="V/m" labels={["9.377e+07", "6.251e+07", "3.126e+07", "0.000e+00"]} />
          </Viewport>
        </Stage>
      </Body>
      <StatusBar>3.8e+02 mm x 2.4e+02 mm</StatusBar>
    </Window>
  );
}
